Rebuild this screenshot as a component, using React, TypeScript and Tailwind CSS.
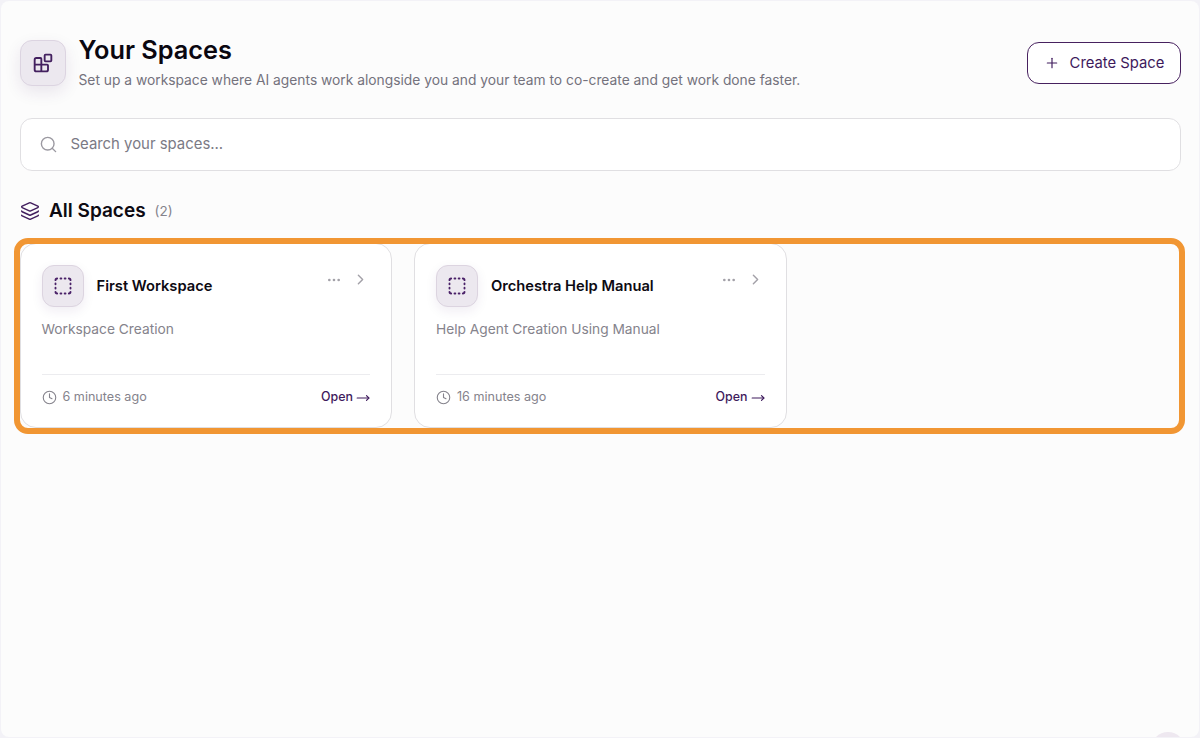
import { Blocks, ChevronRight, Clock, Ellipsis, Layers, MoveRight, Plus, Search, SquareDashed } from "lucide-react";

const spaces = [
  { id: 1, name: "First Workspace", description: "Workspace Creation", updated: "6 minutes ago" },
  { id: 2, name: "Orchestra Help Manual", description: "Help Agent Creation Using Manual", updated: "16 minutes ago" },
];

const SpaceCard = ({ name, description, updated }: { name: string; description: string; updated: string }) => (
  <div className="h-[185px] rounded-2xl border-[1.5px] border-[#e0dfe2] bg-white px-[21px] pt-[21px] flex flex-col">
    <div className="flex items-start justify-between">
      <div className="flex items-center gap-[13px]">
        <div className="w-[42px] h-[42px] rounded-xl border border-[#dcd4e0] bg-[#ece8ef] shadow-[0_4px_12px_rgba(70,30,100,0.08)] flex items-center justify-center">
          <SquareDashed className="w-[20px] h-[20px] text-[#4a2168]" strokeWidth={2.25} />
        </div>
        <span className="text-[14.7px] font-semibold text-[#0d0a12]">{name}</span>
      </div>
      <div className="flex items-center gap-[10px] pt-[6px] pr-[1px] text-[#a3a1a8]">
        <Ellipsis className="w-[16px] h-[16px]" />
        <ChevronRight className="w-[17px] h-[17px]" />
      </div>
    </div>
    <p className="mt-[13px] text-[13.75px] leading-[18px] text-[#85838c]">{description}</p>
    <div className="mt-[36px] border-t border-[#ececef] pt-[13px] flex items-center justify-between">
      <div className="flex items-center gap-[6px] text-[12.6px] text-[#85838c]">
        <Clock className="w-[15px] h-[15px]" strokeWidth={1.75} />
        <span>{updated}</span>
      </div>
      <div className="flex items-center gap-[3px] text-[12.4px] font-medium text-[#3e1a5c]">
        <span>Open</span>
        <MoveRight className="w-[14px] h-[14px]" strokeWidth={2} />
      </div>
    </div>
  </div>
);

const App = () => {
  return (
    <div className="relative w-[1200px] h-[738px] overflow-hidden bg-[#f3f2f7] p-[1px] font-['Inter',sans-serif]">
      <div className="relative h-full overflow-hidden rounded-lg bg-[#fcfcfc] pl-[18.5px] pr-[18px] pt-[39px]">
        {/* Header */}
        <div className="flex items-start justify-between">
          <div className="flex items-start gap-[13px]">
            <div className="w-[46px] h-[46px] rounded-xl border border-[#dcd4e1] bg-[#ece8ef] shadow-[0_6px_16px_rgba(70,30,100,0.1)] flex items-center justify-center">
              <Blocks className="w-[20px] h-[20px] text-[#43205f]" strokeWidth={2.25} />
            </div>
            <div>
              <h1 className="text-[25.3px] leading-[24px] font-semibold text-[#0a0710] -mt-[2px]">Your Spaces</h1>
              <p className="mt-[9px] text-[13.8px] leading-[18px] text-[#74727c]">
                Set up a workspace where AI agents work alongside you and your team to co-create and get work done faster.
              </p>
            </div>
          </div>
          <button className="mt-[2px] h-[42px] w-[154px] rounded-xl border border-[#47215f] bg-white flex items-center justify-center gap-[10px] text-[14.8px] text-[#3e1a5c]">
            <Plus className="w-[16px] h-[16px]" strokeWidth={1.75} />
            Create Space
          </button>
        </div>

        {/* Search */}
        <div className="mt-[29px] h-[53px] rounded-xl border-[1.5px] border-[#e0dfe2] bg-white flex items-center gap-[13px] px-[18px]">
          <Search className="w-[19px] h-[19px] text-[#9b99a1]" strokeWidth={1.75} />
          <span className="text-[14.9px] text-[#7b7a85]">Search your spaces...</span>
        </div>

        {/* All spaces */}
        <div className="mt-[30px] flex items-center">
          <Layers className="w-[20px] h-[20px] text-[#43205f]" strokeWidth={1.75} />
          <span className="ml-[9.5px] text-[19px] leading-[20px] font-semibold text-[#0d0a12]">All Spaces</span>
          <span className="ml-[9px] text-[13.5px] text-[#85838c]">(2)</span>
        </div>

        <div className="mt-[22px] grid grid-cols-3 gap-[22px]">
          {spaces.map((space) => (
            <SpaceCard key={space.id} name={space.name} description={space.description} updated={space.updated} />
          ))}
        </div>

        {/* Highlight round the cards */}
        <div className="absolute left-[13px] top-[237px] w-[1171px] h-[196px] rounded-[14px] border-[6px] border-[#f19633]" />

        {/* Help button, cut off by the window */}
        <div className="absolute left-[1150px] top-[731px] w-[34px] h-[34px] rounded-full bg-[#eee8f0]" />
      </div>
    </div>
  );
};

export default App;
